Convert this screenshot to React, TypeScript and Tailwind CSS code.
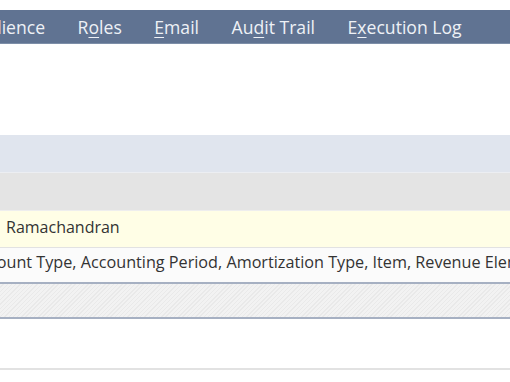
const font = { fontFamily: '"Open Sans", "Liberation Sans", sans-serif' };

function Tab({ pre, key1, post }: { pre: string; key1: string; post: string }) {
  return (
    <span className="whitespace-nowrap">
      {pre}
      <span className="underline underline-offset-[3px] decoration-1">{key1}</span>
      {post}
    </span>
  );
}

export default function App() {
  return (
    <div className="w-[510px] h-[382px] overflow-hidden bg-white" style={font}>
      <div className="h-[10px]" />
      <div className="h-[34px] pt-[2px] bg-[#607392] border-b border-[#7d8ea8] flex items-center gap-[32.5px] text-[17.6px] text-[#eef1f6] overflow-hidden">
        <span className="-ml-[31px] whitespace-nowrap">Audience</span>
        <Tab pre="R" key1="o" post="les" />
        <Tab pre="" key1="E" post="mail" />
        <Tab pre="Au" key1="d" post="it Trail" />
        <Tab pre="E" key1="x" post="ecution Log" />
      </div>
      <div className="h-[91px]" />
      <div className="h-[37px] bg-[#e0e5ee]" />
      <div className="h-[1px] bg-[#eceef2]" />
      <div className="h-[37px] bg-[#e4e4e4]" />
      <div className="h-[1px] bg-[#eeeeee]" />
      <div className="h-[36px] bg-[#fffee6] flex items-center pb-[5px] pl-[6px] text-[16px] text-[#333]">
        Ramachandran
      </div>
      <div className="h-[1px] bg-[#e2e2e2]" />
      <div className="h-[34px] bg-[#fbfbfb] flex items-center pb-[6px] text-[16.2px] text-[#333] overflow-hidden whitespace-nowrap">
        <span className="-ml-[29px]">Account Type, Accounting Period, Amortization Type, Item, Revenue Element</span>
      </div>
      <div className="h-[37px] border-y-2 border-[#a6b0c2] bg-[repeating-linear-gradient(135deg,#f2f2f2_0px,#f2f2f2_2px,#e9e9e9_2px,#e9e9e9_3px)]" />
      <div className="h-[49px]" />
      <div className="h-[2px] bg-[#e2e2e2]" />
    </div>
  );
}
